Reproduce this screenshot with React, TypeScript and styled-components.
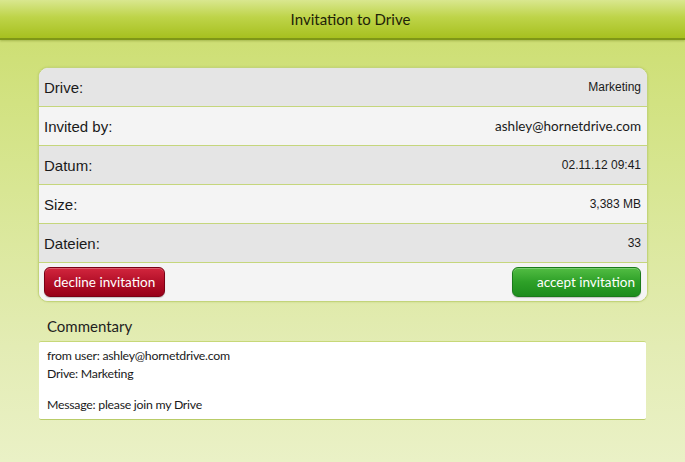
import styled, { createGlobalStyle } from "styled-components";

const GlobalStyle = createGlobalStyle`
  html, body {
    margin: 0;
    padding: 0;
  }
  #root {
    width: 685px;
    height: 462px;
    overflow: hidden;
  }
`;

export const Screen = styled.div`
  width: 685px;
  height: 462px;
  display: flex;
  flex-direction: column;
  background: linear-gradient(180deg, #cbdd6c 0%, #d6e58e 35%, #e3ecb4 75%, #eaf1c6 100%);
  font-family: "Liberation Sans", Arial, sans-serif;
`;

export const TopBar = styled.div`
  height: 38px;
  flex-shrink: 0;
  display: flex;
  align-items: center;
  justify-content: center;
  padding-left: 16px;
  background: linear-gradient(180deg, #d9e78f 0%, #bed449 45%, #a7c01f 100%);
  border-bottom: 2px solid #7f9617;
  box-shadow: 0 1px 2px rgba(90, 110, 10, 0.35);
`;

export const TopTitle = styled.h1`
  margin: 0;
  font-family: Lato, "Open Sans", sans-serif;
  font-weight: 400;
  font-size: 15px;
  color: #1e2208;
`;

export const Content = styled.div`
  display: flex;
  flex-direction: column;
  padding: 27px 37px 0 38px;
`;

export const Card = styled.div`
  border: 1px solid #c3d47a;
  border-radius: 10px;
  overflow: hidden;
  background: #f4f4f4;
  box-shadow: 0 0 2px rgba(150, 170, 60, 0.4);
`;

export const InfoRow = styled.div<{ $shade: boolean }>`
  height: 38px;
  display: flex;
  align-items: center;
  justify-content: space-between;
  padding: 0 6px 0 5px;
  background: ${(p) => (p.$shade ? "#e5e5e5" : "#f4f4f4")};
  border-bottom: 1px solid #c5d67c;
`;

export const Label = styled.span`
  font-size: 15px;
  color: #1a1a1a;
`;

export const Value = styled.span<{ $soft?: boolean }>`
  font-family: ${(p) => (p.$soft ? "Lato, sans-serif" : `"Liberation Sans", Arial, sans-serif`)};
  font-size: ${(p) => (p.$soft ? "13.5px" : "12px")};
  color: #1a1a1a;
`;

export const ActionRow = styled.div`
  height: 38px;
  display: flex;
  align-items: center;
  justify-content: space-between;
  padding: 0 6px 0 5px;
  background: #f4f4f4;
`;

export const ActionButton = styled.button<{ $kind: "decline" | "accept" }>`
  height: 30px;
  border-radius: 6px;
  border: 1px solid ${(p) => (p.$kind === "decline" ? "#7a0014" : "#1a7a1a")};
  background: ${(p) =>
    p.$kind === "decline"
      ? "linear-gradient(180deg, #d2263d 0%, #b30f28 50%, #980018 100%)"
      : "linear-gradient(180deg, #52bd43 0%, #2ea028 50%, #1d8d1d 100%)"};
  color: #ffffff;
  font-family: Lato, sans-serif;
  font-size: 13.5px;
  white-space: nowrap;
  padding: 0 ${(p) => (p.$kind === "decline" ? "4px" : "5px")} 0 4px;
  width: ${(p) => (p.$kind === "decline" ? "121px" : "129px")};
  text-align: ${(p) => (p.$kind === "decline" ? "center" : "right")};
  box-shadow: inset 0 1px 0 rgba(255, 255, 255, 0.25), 0 1px 1px rgba(0, 0, 0, 0.2);
  cursor: pointer;
`;

export const SectionTitle = styled.h2`
  margin: 15px 0 6px 9px;
  font-family: Lato, sans-serif;
  font-weight: 400;
  font-size: 15px;
  color: #1e1e1e;
`;

export const CommentBox = styled.div`
  width: 607px;
  height: 79px;
  box-sizing: border-box;
  margin-left: 1px;
  background: #ffffff;
  border-top: 1px solid #c7d878;
  border-bottom: 1px solid #b9cc68;
  border-radius: 2px;
  padding: 5px 8px;
  font-family: Lato, sans-serif;
  font-size: 12.3px;
  letter-spacing: -0.25px;
  line-height: 18px;
  color: #1a1a1a;
`;

export const CommentLine = styled.div<{ $gap?: boolean }>`
  margin-top: ${(p) => (p.$gap ? "13px" : "0")};
`;

const rows: { label: string; value: string; soft?: boolean }[] = [
  { label: "Drive:", value: "Marketing" },
  { label: "Invited by:", value: "ashley@hornetdrive.com", soft: true },
  { label: "Datum:", value: "02.11.12 09:41" },
  { label: "Size:", value: "3,383 MB" },
  { label: "Dateien:", value: "33" },
];

const App = () => {
  return (
    <>
      <GlobalStyle />
      <Screen>
        <TopBar>
          <TopTitle>Invitation to Drive</TopTitle>
        </TopBar>
        <Content>
          <Card>
            {rows.map((r, i) => (
              <InfoRow key={r.label} $shade={i % 2 === 0}>
                <Label>{r.label}</Label>
                <Value $soft={r.soft}>{r.value}</Value>
              </InfoRow>
            ))}
            <ActionRow>
              <ActionButton $kind="decline">decline invitation</ActionButton>
              <ActionButton $kind="accept">accept invitation</ActionButton>
            </ActionRow>
          </Card>
          <SectionTitle>Commentary</SectionTitle>
          <CommentBox>
            <CommentLine>from user: ashley@hornetdrive.com</CommentLine>
            <CommentLine>Drive: Marketing</CommentLine>
            <CommentLine $gap>Message: please join my Drive</CommentLine>
          </CommentBox>
        </Content>
      </Screen>
    </>
  );
};

export default App;
